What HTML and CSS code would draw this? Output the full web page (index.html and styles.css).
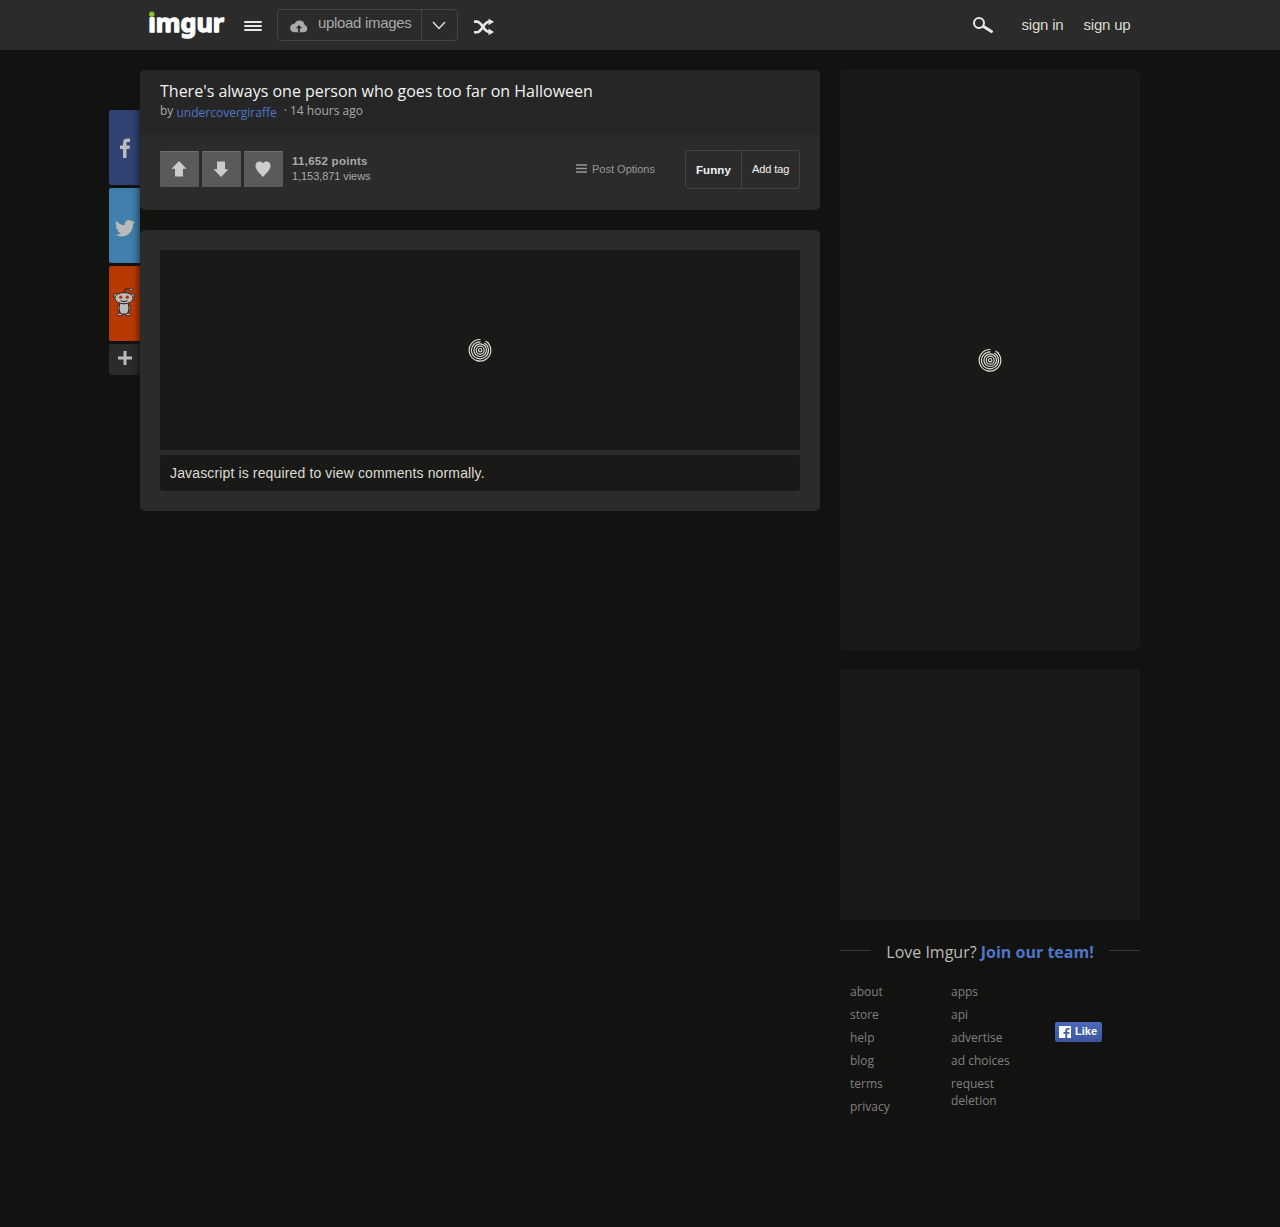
FILE: index.html
```html
<!DOCTYPE html>
<html lang="en">
<head>
<meta charset="utf-8">
<title>There's always one person who goes too far on Halloween - Imgur</title>
<link rel="stylesheet" href="styles.css">
</head>
<body>
<header class="topbar">
  <div class="topbar-inner">
    <a class="logo">
      <svg width="80" height="42" viewBox="0 0 80 42">
        <defs>
          <linearGradient id="logo-fill" gradientUnits="userSpaceOnUse" x1="0" y1="0" x2="0" y2="42">
            <stop offset=".4" stop-color="#fff" stop-opacity="0"/>
            <stop offset=".4" stop-color="#fff"/>
          </linearGradient>
        </defs>
        <text class="logo-text" x="1.2" y="31.5" textLength="76" lengthAdjust="spacingAndGlyphs">imgur</text>
        <circle cx="4.800" cy="14.200" r="2.700" fill="#89c623"/>
      </svg>
    </a>
    <svg class="menu" width="18" height="10" viewBox="0 0 18 10"><path d="M1 1h16M1 5h16M1 9h16" stroke="#e8e6e4" stroke-width="2" stroke-linecap="round"/></svg>
    <div class="upload">
      <a class="upload-main">
        <svg width="18" height="13" viewBox="0 0 18 13"><path d="M4 12.200h10a3.700 3.700 0 0 0 .7-7.200A5.300 5.300 0 0 0 4.600 3.800 4.200 4.200 0 0 0 4 12.200z" fill="#a9a9a9"/><path d="M9 5l-3.200 3.200h2.300v4h1.800v-4h2.300z" fill="#2b2b2b"/></svg>
        <span>upload images</span>
      </a>
      <a class="upload-more"><svg width="14" height="9" viewBox="0 0 14 9"><path d="M1 1l6 6.400L13 1" fill="none" stroke="#ddddd1" stroke-width="1.500"/></svg></a>
    </div>
    <svg class="shuffle" width="22" height="18" viewBox="0 0 22 18"><path d="M1 3.600h3c5 0 6.500 10.200 12 10.200h1M1 14.200h3c5 0 6.500-10.400 12-10.400h1" fill="none" stroke="#e8e8e5" stroke-width="2.600"/><path d="M15.500.8l5.500 3-5.500 3.400zM15.500 10.600l5.500 3.400-5.500 3.200z" fill="#e8e8e5"/></svg>
    <nav class="account">
      <svg width="22" height="18" viewBox="0 0 22 18"><circle cx="7" cy="7" r="5" fill="none" stroke="#eaeaea" stroke-width="2"/><path d="M11.500 10.500l8 5" stroke="#eaeaea" stroke-width="3" stroke-linecap="round"/></svg>
      <a class="sign-in">sign in</a>
      <a>sign up</a>
    </nav>
  </div>
</header>

<div class="page">
  <aside class="social">
    <a class="share facebook"><svg width="12" height="20" viewBox="0 0 12 20"><path d="M4 20v-9H1V7.500h3V5c0-3 1.500-4.500 4-4.500h3V4H9C8 4 7.500 4.500 7.500 5.500v2H11L10.500 11h-3v9z" fill="#bbb"/></svg></a>
    <a class="share twitter"><svg width="20" height="17" viewBox="0 0 24 20"><path d="M24 2.300a10 10 0 0 1-2.800.8A5 5 0 0 0 23.300.400a10 10 0 0 1-3.100 1.200 4.900 4.900 0 0 0-8.400 4.500A14 14 0 0 1 1.700 1a4.900 4.900 0 0 0 1.500 6.600A5 5 0 0 1 1 7a4.900 4.900 0 0 0 4 4.800 5 5 0 0 1-2.300.1 4.900 4.900 0 0 0 4.600 3.400A10 10 0 0 1 0 17.300a14 14 0 0 0 7.500 2.200c9.200 0 14.300-7.800 14-14.700A10 10 0 0 0 24 2.300z" fill="#bbb"/></svg></a>
    <a class="share reddit"><svg width="22" height="30" viewBox="0 0 22 30">
      <g fill="#bbb" stroke="#30211c" stroke-width="1">
        <path d="M11 6l1.300-4.500L17 2.500" fill="none"/><circle cx="18" cy="2.500" r="1.500"/>
        <ellipse cx="7" cy="27.500" rx="2.800" ry="1.400"/><ellipse cx="15" cy="27.500" rx="2.800" ry="1.400"/>
        <path d="M6.500 17c-3 3-2 6 .5 7.500M15.500 17c3 3 2 6-.5 7.500"/>
        <path d="M7 16h8c1.500 4 1 9-1.200 11H8.200C6 25 5.500 20 7 16z"/>
        <circle cx="3" cy="9" r="2.400"/><circle cx="19" cy="9" r="2.400"/>
        <ellipse cx="11" cy="11.200" rx="9.200" ry="5.600"/><path d="M7.500 13.700q3.500 2 7 0" fill="none"/>
      </g>
      <circle cx="7.700" cy="10.200" r="1.600" fill="#bd2c08"/><circle cx="14.300" cy="10.200" r="1.600" fill="#bd2c08"/></svg></a>
    <a class="share more"><svg width="14" height="14" viewBox="0 0 14 14"><path d="M7 0v14M0 7h14" stroke="#bbb" stroke-width="3"/></svg></a>
  </aside>

  <main class="main">
    <section class="post-card">
      <div class="post-header">
        <h1>There's always one person who goes too far on Halloween</h1>
        <p>by <a>undercovergiraffe</a><span>· 14 hours ago</span></p>
      </div>
      <div class="post-actions">
        <div class="votes">
          <button class="vote"><svg width="16" height="16" viewBox="0 0 16 16"><path d="M8 0l7.500 7.800H12V15.500H4V7.800H.5z"/></svg></button>
          <button class="vote"><svg width="16" height="16" viewBox="0 0 16 16"><path d="M8 16L.5 8.200H4V.5h8v7.700h3.500z"/></svg></button>
          <button class="vote"><svg width="16" height="16" viewBox="0 0 16 16"><path d="M8 16C5 12.500.5 9 .5 4.500.5-.2 6.200-.8 8 2.300 9.800-.8 15.500-.2 15.500 4.500 15.500 9 11 12.500 8 16z"/></svg></button>
        </div>
        <div class="stats"><b>11,652 points</b><span>1,153,871 views</span></div>
        <a class="options"><svg width="11" height="9" viewBox="0 0 11 9"><path d="M0 1h11M0 4.500h11M0 8h11" stroke="#999" stroke-width="1.500"/></svg>Post Options</a>
        <div class="tags"><a class="tag">Funny</a><a class="add-tag">Add tag</a></div>
      </div>
    </section>
    <section class="comments-card">
      <div class="comments-loading">
        <svg class="spinner" width="24" height="24" viewBox="0 0 24 24"><g id="rings" fill="none" stroke="#ddddd1" stroke-width="1.200"><path d="M17.500 3A10.800 10.800 0 1 1 12.500 1.500M16.200 4.900A8.500 8.500 0 1 1 12.500 3.800M19.300 4l1.500 1.500"/><circle cx="12.200" cy="12.200" r="6.300"/><circle cx="12.200" cy="12.200" r="4"/><circle cx="12.200" cy="12.200" r="1.700"/></g></svg>
      </div>
      <div class="notice">Javascript is required to view comments normally.</div>
    </section>
  </main>

  <aside class="side">
    <div class="side-gallery"><svg class="spinner" width="24" height="24" viewBox="0 0 24 24"><use href="#rings"/></svg></div>
    <div class="side-ad"></div>
    <div class="team"><span>Love Imgur? <a>Join our team!</a></span></div>
    <footer class="footer">
      <ul><li>about</li><li>store</li><li>help</li><li>blog</li><li>terms</li><li>privacy</li></ul>
      <ul><li>apps</li><li>api</li><li>advertise</li><li>ad choices</li><li>request<br>deletion</li></ul>
      <a class="like"><svg width="12" height="12" viewBox="0 0 12 12"><rect width="12" height="12" rx=".6" fill="#fff"/><path d="M6.300 12V7.800H4.500V6h1.800V4.600C6.300 3 7.200 2 8.800 2h1.800v1.800H9.200c-.7 0-.9.300-.9.900V6h2.200v1.800H8.300V12z" fill="#4460ae"/></svg>Like</a>
    </footer>
  </aside>
</div>
</body>
</html>
```
FILE: styles.css
```css
* { box-sizing: border-box; }
body {
  margin: 0;
  min-height: 1227px;
  background: #121211;
  color: #ddddd1;
  font-family: "Liberation Sans", Arial, sans-serif;
}
svg { display: block; flex: none; }
.topbar { height: 50px; background: #2b2b2b; }
.topbar-inner { width: 1000px; margin: 0 auto; display: flex; align-items: flex-start; }
.logo { width: 80px; margin-left: 7px; }
.logo-text {
  font: 700 25px "Noto Sans", sans-serif;
  fill: url(#logo-fill);
  stroke: url(#logo-fill);
  stroke-width: 1.3px;
  stroke-linejoin: round;
}
.menu { margin: 21px 0 0 17px; }
.upload {
  display: flex;
  width: 181px;
  height: 32px;
  margin: 9px 0 0 15px;
  border: 1px solid #444;
  border-radius: 4px;
}
.upload-main { display: flex; width: 144px; padding: 4px 0 0 12px; gap: 10px; border-right: 1px solid #444; font-size: 15px; line-height: 17px; letter-spacing: -.32px; color: #a9a9a9; white-space: nowrap; }
.upload-main svg { margin-top: 6px; }
.upload-more { padding: 11px 0 0 10px; }
.shuffle { margin: 18px 0 0 15px; }
.account { display: flex; margin: 16px 9.500px 0 auto; font-size: 15px; line-height: 18px; letter-spacing: -.2px; }
.account a { color: #ddddd1; }
.account svg { margin-right: 28px; }
.account .sign-in { margin-right: 20px; }

.page { width: 1031px; margin: 20px 0 0 109px; display: flex; align-items: flex-start; }
.social { width: 31px; margin-top: 40px; display: flex; flex-direction: column; gap: 3px; }
.share {
  height: 75px;
  display: flex;
  align-items: center;
  justify-content: center;
  border-radius: 2px 0 0 2px;
  box-shadow: inset -7px 0 6px -5px rgba(0, 0, 0, .5);
}
.facebook { background: #314373; }
.twitter { background: #417fac; padding-top: 5px; }
.reddit { background: #b93905; padding: 0 1px 4px 0; }
.more { height: 31px; background: #2b2b2b; padding-bottom: 3px; }

.main { width: 680px; }
.post-card { height: 140px; border-radius: 5px; background: #2b2b2b; overflow: hidden; }
.post-header { height: 63px; padding: 10px 20px 0; background: #262626; box-shadow: 0 1px 3px rgba(0, 0, 0, .12); font-family: "Open Sans", sans-serif; }
.post-header h1 { margin: 0; font-size: 16px; line-height: 22px; font-weight: 400; color: #f2f2f2; }
.post-header p { margin: 0; font-size: 12px; line-height: 17px; color: #aaa; }
.post-header p a { position: relative; top: 2px; color: #4e76c9; }
.post-header p span { margin-left: 7px; }
.post-actions { display: flex; padding: 17px 20px 0; }
.votes { display: flex; gap: 3px; margin-top: 1px; }
.vote {
  display: flex;
  align-items: center;
  justify-content: center;
  width: 39px;
  height: 36px;
  padding: 0 1px 2px 0;
  border: 0;
  border-top: 1px solid #6d6d6d;
  border-radius: 1px;
  background: #5a5a5a;
}
.vote path { fill: #ccc; }
.stats { margin: 4px 0 0 9px; font-size: 11px; line-height: 15px; letter-spacing: -.07px; color: #aaa; }
.stats b, .stats span { display: block; }
.stats b { width: 76px; font-size: 11.5px; letter-spacing: .27px; white-space: nowrap; }
.options { display: flex; gap: 5px; margin: 13px 30px 0 auto; font-size: 11px; line-height: 13px; color: #999; }
.options svg { margin-top: 1px; }
.tags { display: flex; width: 115px; height: 39px; border: 1px solid #444; border-radius: 4px; font-size: 11px; line-height: 37px; letter-spacing: -.1px; color: #f2f2f2; }
.tag { width: 56px; padding-left: 10px; border-right: 1px solid #444; font-size: 11.5px; line-height: 38px; letter-spacing: .1px; font-weight: bold; }
.add-tag { padding-left: 10px; }
.comments-card { height: 281px; margin-top: 20px; padding: 20px; border-radius: 5px; background: #2b2b2b; }
.comments-loading { height: 200px; display: flex; align-items: center; justify-content: center; background: #191918; }
.notice { height: 36px; margin-top: 5px; padding: 0 10px; border-radius: 4px; background: #191918; font-size: 14px; line-height: 36px; letter-spacing: .14px; }

.side { width: 300px; margin-left: 20px; }
.side-gallery { height: 580px; display: flex; align-items: center; justify-content: center; border-radius: 3px; background: #191918; }
.side-ad { height: 250px; margin-top: 20px; background: #191918; }
.team { display: flex; align-items: center; margin-top: 20px; font: 16px/22px "Open Sans", sans-serif; color: #bbb; white-space: nowrap; }
.team::before, .team::after { content: ""; flex: 1; height: 1px; margin-bottom: 3px; background: #383836; }
.team span { padding: 1px 15px 0; }
.team a { font-weight: 700; color: #4e76c9; }
.footer { display: flex; padding: 20px 10px 0; font: 12px/17px "Open Sans", sans-serif; color: #808080; }
.footer ul { width: 101px; margin: 0; padding: 0; list-style: none; }
.footer li { margin-bottom: 6px; }
.like {
  display: flex;
  gap: 4px;
  width: 47px;
  height: 20px;
  margin: 39px 0 0 3px;
  padding: 4px;
  border-radius: 2px;
  background: linear-gradient(#4c69ba, #3b55a0);
  font: bold 11px/11px "Liberation Sans", Arial, sans-serif;
  color: #fff;
}
```
